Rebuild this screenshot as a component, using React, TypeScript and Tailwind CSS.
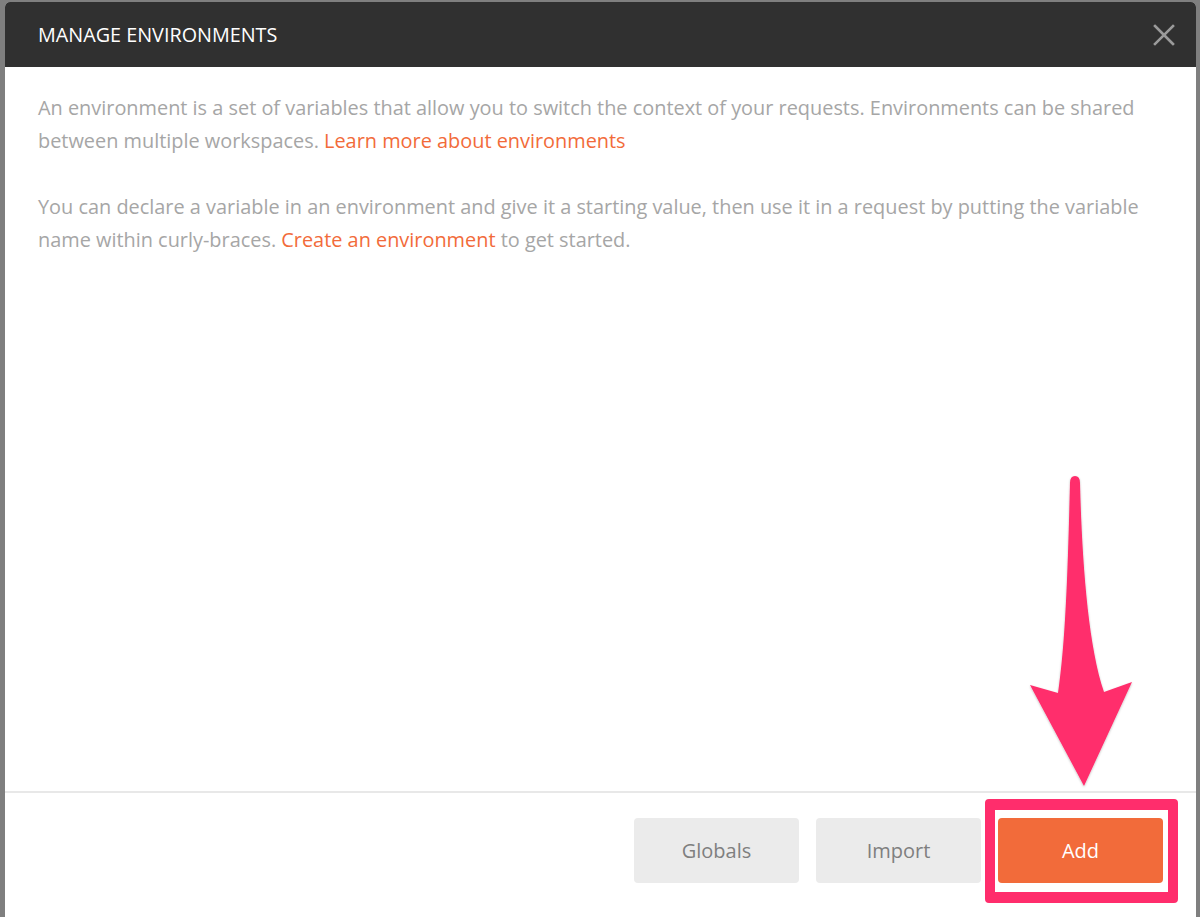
import React from "react";

export default function App() {
  const font = { fontFamily: '"Open Sans", "Noto Sans", sans-serif' };
  return (
    <div
      className="relative h-[917px] w-[1200px] overflow-hidden bg-[#7f7f7f] pl-[5px] pr-[4px] pt-[2px]"
      style={font}
    >
      <div className="flex h-full flex-col overflow-hidden rounded-t-[5px] bg-white">
        <div className="flex h-[65px] shrink-0 items-center justify-between bg-[#303030] pl-[33px] pr-[20px]">
          <span className="text-[19.8px] text-white">MANAGE ENVIRONMENTS</span>
          <svg width="24" height="24" viewBox="0 0 24 24" className="mt-[1px]">
            <path d="M3 3 L21 21 M21 3 L3 21" stroke="#9a9a9a" strokeWidth="2.6" strokeLinecap="square" />
          </svg>
        </div>
        <div className="flex-1 px-[33px] pt-[24px] text-[19.9px] leading-[33px] text-[#a6a6a6]">
          <p>
            An environment is a set of variables that allow you to switch the context of your requests. Environments can be shared
            between multiple workspaces. <span className="text-[#f26b3a]">Learn more about environments</span>
          </p>
          <p className="mt-[33px]">
            You can declare a variable in an environment and give it a starting value, then use it in a request by putting the variable
            name within curly-braces. <span className="text-[#f26b3a]">Create an environment</span> to get started.
          </p>
        </div>
        <div className="flex h-[126px] shrink-0 items-start justify-end gap-[17px] border-t-2 border-[#e8e8e8] pr-[33px] pt-[25px]">
          <button className="h-[65px] w-[165px] rounded-[4px] bg-[#ebebeb] text-[20px] text-[#7f7f7f]">Globals</button>
          <button className="h-[65px] w-[165px] rounded-[4px] bg-[#ebebeb] text-[20px] text-[#7f7f7f]">Import</button>
          <div className="relative">
            <button className="h-[65px] w-[165px] rounded-[4px] bg-[#f26b3a] text-[20px] text-white">Add</button>
            <div className="pointer-events-none absolute left-[-13px] top-[-19px] h-[104px] w-[193px] rounded-[4px] border-x-[10px] border-y-[11px] border-[#ff2d6c]" />
          </div>
        </div>
      </div>
      <svg className="pointer-events-none absolute left-0 top-0" width="1200" height="917" viewBox="0 0 1200 917">
        <defs>
          <filter id="sh" x="-20%" y="-20%" width="140%" height="140%">
            <feDropShadow dx="0" dy="1" stdDeviation="1" floodColor="#000" floodOpacity="0.25" />
          </filter>
        </defs>
        <path
          d="M1070 483 Q1070 476 1075 476 Q1080 476 1080 483 C1082 560 1088 645 1104 692 L1132 682 L1084 786 L1030 685 L1058 693 C1066 640 1068 560 1070 483 Z"
          fill="#ff2d6c"
          filter="url(#sh)"
        />
      </svg>
    </div>
  );
}
